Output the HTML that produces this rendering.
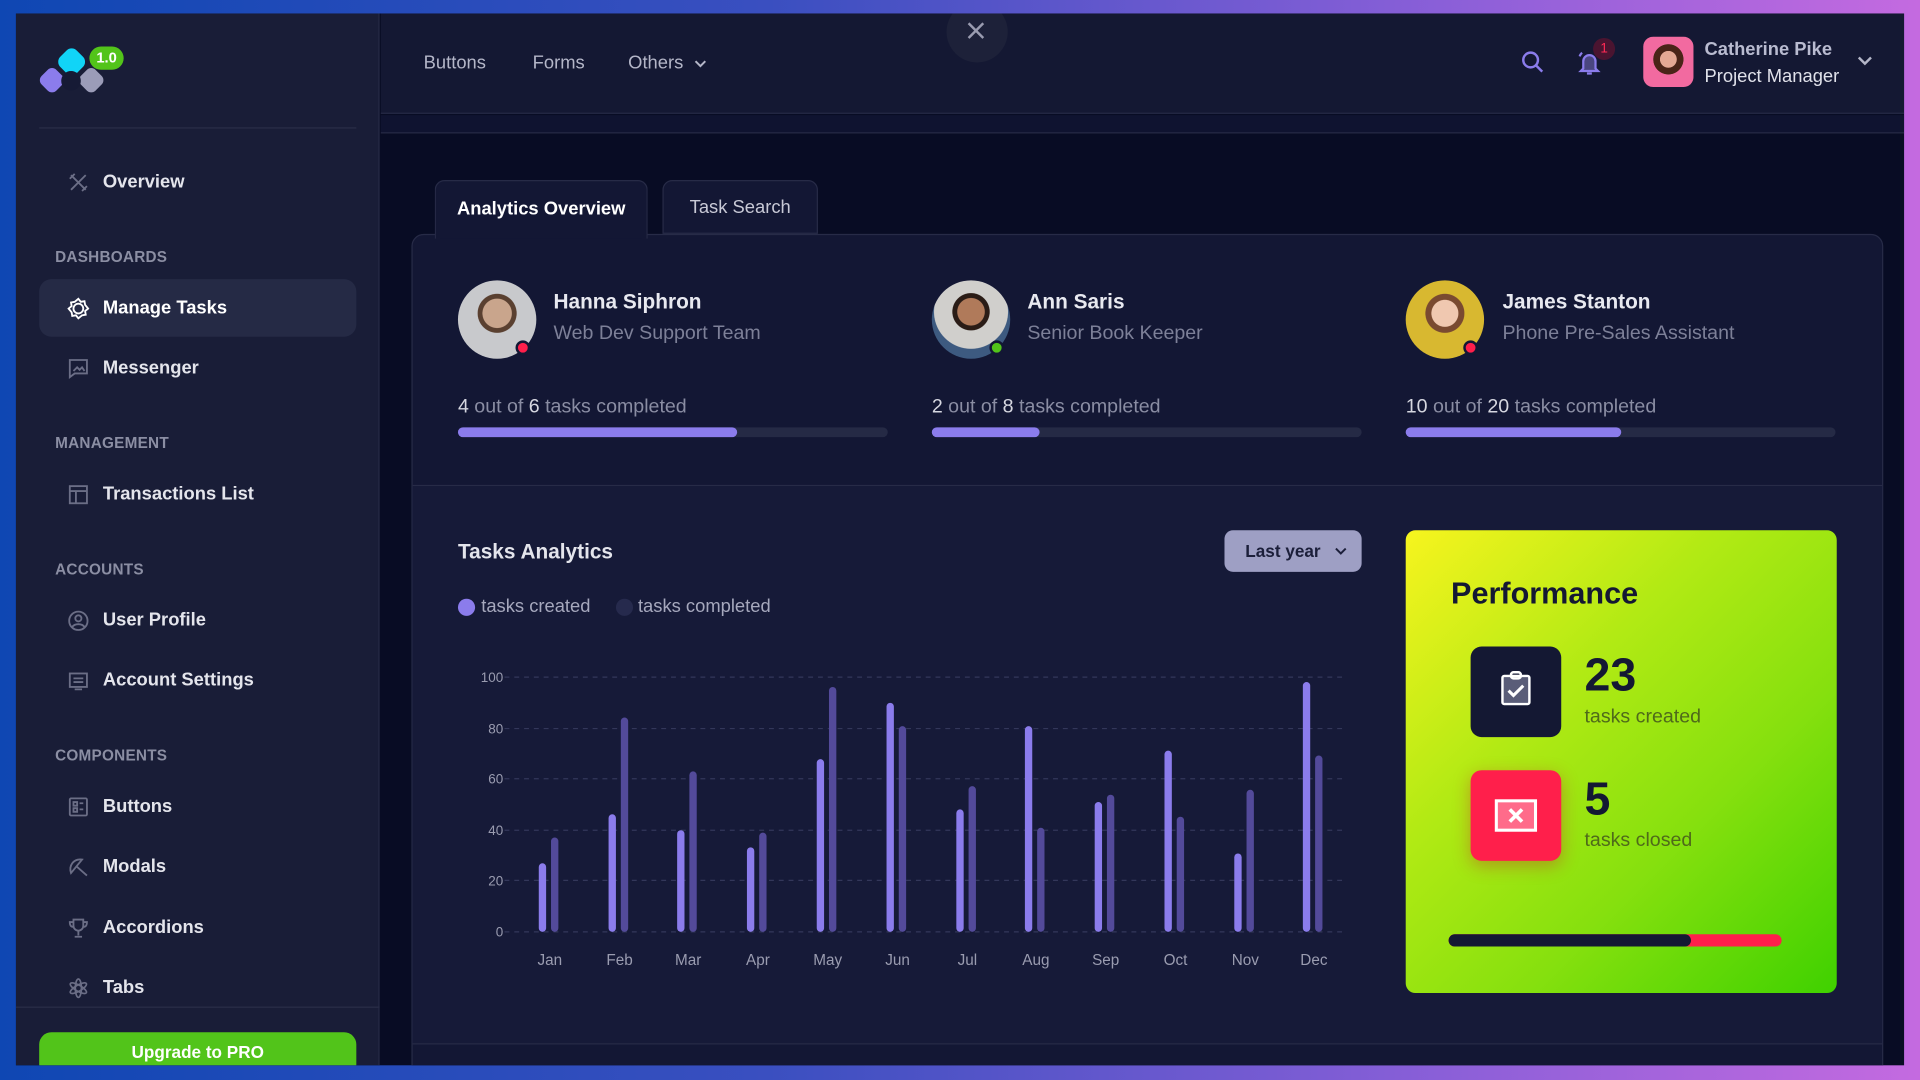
<!DOCTYPE html>
<html><head><meta charset="utf-8"><style>
*{margin:0;padding:0;box-sizing:border-box}
html,body{width:1920px;height:1080px;overflow:hidden;background:#1a4bb0}
body{font-family:"Liberation Sans",sans-serif}
#w{position:absolute;left:0;top:0;width:1568px;height:882px;transform:scale(1.22449);transform-origin:0 0;background:linear-gradient(90deg,#0f47b3 0%,#3a4fc0 40%,#8a5fd8 75%,#c46ae0 100%);overflow:hidden}
.a{position:absolute}
#in{left:13px;top:11px;width:1542px;height:859px;background:#080c24;overflow:hidden}
#side{left:0;top:0;width:297px;height:859px;background:#191d37;border-right:1px solid #262a45}
.sec{position:absolute;left:32px;font-size:12.5px;font-weight:bold;color:#8b8ea3;letter-spacing:0.2px}
.it{position:absolute;left:71px;font-size:15px;font-weight:bold;color:#e4e5ec}
.ic{position:absolute;left:42px;width:18px;height:18px}
#hdr{left:298px;top:0;width:1244px;height:82px;background:#141833;border-bottom:1px solid #262a45}
.nav{position:absolute;top:32px;font-size:15px;color:#b4b6c8}
.card{background:#131734;border:1px solid #272b47;border-radius:10px}
.nm{font-size:17px;font-weight:bold;color:#e8e9f0}
.rl{font-size:16px;color:#7d8098}
.pt{font-size:16px;color:#8a8da3}
.pt b{color:#d6d7e0;font-weight:normal}
.bar{height:8px;border-radius:4px;background:#252a45}
.bar i{display:block;height:8px;border-radius:4px;background:#8b7cec}
.av{width:64px;height:64px;border-radius:50%}
.dot{width:12px;height:12px;border-radius:50%;border:2px solid #131734}
</style></head><body><div id="w">
<div id="in" class="a">
 <div id="side" class="a">
  <div class="a" style="left:35.5px;top:29.5px;width:19px;height:19px;background:#11d4f7;border-radius:6px;transform:rotate(45deg)"></div>
  <div class="a" style="left:20.5px;top:45.5px;width:17px;height:17px;background:#8b7cec;border-radius:5px;transform:rotate(45deg)"></div>
  <div class="a" style="left:52.5px;top:45.5px;width:17px;height:17px;background:#9b9cb8;border-radius:5px;transform:rotate(45deg)"></div>
  <div class="a" style="left:37px;top:47px;width:16px;height:16px;background:#161a35;border-radius:50%"></div>
  <div class="a" style="left:60px;top:27px;width:28px;height:19px;background:#52c41a;border-radius:10px;color:#fff;font-size:12px;font-weight:bold;text-align:center;line-height:19px">1.0</div>
  <div class="a" style="left:19px;top:93px;width:259px;height:1px;background:#2a2e48"></div>

  <svg class="ic" style="top:129px" viewBox="0 0 18 18" fill="none" stroke="#6b6e86" stroke-width="1.5"><path d="M3 3l12 12M15 3L3 15M2 6l4-4M12 16l4-4"/></svg>
  <div class="it" style="top:129px">Overview</div>
  <div class="sec" style="top:192px">DASHBOARDS</div>
  <div class="a" style="left:19px;top:217px;width:259px;height:47px;background:#252a45;border-radius:10px"></div>
  <svg class="ic" style="top:232px" viewBox="0 0 18 18" fill="none" stroke="#fff" stroke-width="1.5"><path d="M9 1l2 2.5 3-.5.5 3L17 9l-2.5 2 .5 3-3 .5L9 17l-2-2.5-3 .5-.5-3L1 9l2.5-2-.5-3 3-.5z"/><circle cx="9" cy="9" r="4"/></svg>
  <div class="it" style="top:232px;color:#fff">Manage Tasks</div>
  <svg class="ic" style="top:281px" viewBox="0 0 18 18" fill="none" stroke="#6b6e86" stroke-width="1.5"><path d="M2 2h14v11H6l-4 3z"/><path d="M5 11l3-3 2 2 2-2 2 3" /></svg>
  <div class="it" style="top:281px">Messenger</div>
  <div class="sec" style="top:344px">MANAGEMENT</div>
  <svg class="ic" style="top:384px" viewBox="0 0 18 18" fill="none" stroke="#6b6e86" stroke-width="1.5"><rect x="2" y="2" width="14" height="14"/><path d="M2 6h14M7 6v10"/></svg>
  <div class="it" style="top:384px">Transactions List</div>
  <div class="sec" style="top:447px">ACCOUNTS</div>
  <svg class="ic" style="top:487px" viewBox="0 0 18 18" fill="none" stroke="#6b6e86" stroke-width="1.5"><circle cx="9" cy="9" r="7.5"/><circle cx="9" cy="7" r="2.5"/><path d="M4 14c2-3 8-3 10 0"/></svg>
  <div class="it" style="top:487px">User Profile</div>
  <svg class="ic" style="top:536px" viewBox="0 0 18 18" fill="none" stroke="#6b6e86" stroke-width="1.5"><rect x="2" y="3" width="14" height="11"/><path d="M5 7h8M5 10h8M6 16h6"/></svg>
  <div class="it" style="top:536px">Account Settings</div>
  <div class="sec" style="top:599px">COMPONENTS</div>
  <svg class="ic" style="top:639px" viewBox="0 0 18 18" fill="none" stroke="#6b6e86" stroke-width="1.5"><rect x="2" y="2" width="14" height="14" rx="1"/><path d="M5 5h3v3H5zM5 10h3v3H5zM10 6h3M10 11h3"/></svg>
  <div class="it" style="top:639px">Buttons</div>
  <svg class="ic" style="top:688px" viewBox="0 0 18 18" fill="none" stroke="#6b6e86" stroke-width="1.5"><path d="M3 14C1 8 5 2 12 3L3 14zM8 9l8 7"/></svg>
  <div class="it" style="top:688px">Modals</div>
  <svg class="ic" style="top:738px" viewBox="0 0 18 18" fill="none" stroke="#6b6e86" stroke-width="1.5"><path d="M5 2h8v5a4 4 0 01-8 0zM5 4H2c0 3 1 4 3 4M13 4h3c0 3-1 4-3 4M9 11v4M6 16h6"/></svg>
  <div class="it" style="top:738px">Accordions</div>
  <svg class="ic" style="top:787px" viewBox="0 0 18 18" fill="none" stroke="#6b6e86" stroke-width="1.4"><ellipse cx="9" cy="9" rx="2.5" ry="7.5"/><ellipse cx="9" cy="9" rx="2.5" ry="7.5" transform="rotate(60 9 9)"/><ellipse cx="9" cy="9" rx="2.5" ry="7.5" transform="rotate(-60 9 9)"/></svg>
  <div class="it" style="top:787px">Tabs</div>
  <div class="a" style="left:0;top:811px;width:297px;height:1px;background:#2a2e48"></div>
  <div class="a" style="left:19px;top:832px;width:259px;height:36px;background:#52c41a;border-radius:10px;color:#fff;font-weight:bold;font-size:14px;text-align:center;line-height:32px">Upgrade to PRO</div>
 </div>

 <div id="hdr" class="a">
  <div class="nav" style="left:35px">Buttons</div>
  <div class="nav" style="left:124px">Forms</div>
  <div class="nav" style="left:202px">Others</div>
  <svg class="a" style="left:256px;top:38px" width="10" height="7" viewBox="0 0 10 7" fill="none" stroke="#b4b6c8" stroke-width="1.6"><path d="M1 1l4 4 4-4"/></svg>
  <div class="a" style="left:462px;top:-10px;width:50px;height:50px;border-radius:50%;background:#1d2139"></div>
  <svg class="a" style="left:478px;top:6px" width="16" height="16" viewBox="0 0 16 16" stroke="#9a9cb0" stroke-width="2"><path d="M2 2l12 12M14 2L2 14"/></svg>
  <svg class="a" style="left:931px;top:30px" width="20" height="20" viewBox="0 0 20 20" fill="none" stroke="#8b7cec" stroke-width="2"><circle cx="8" cy="8" r="6"/><path d="M12.5 12.5l5 5"/></svg>
  <svg class="a" style="left:975px;top:28px" width="24" height="24" viewBox="0 0 24 24" fill="#4a4680" stroke="#8b7cec" stroke-width="1.8"><path d="M7 17V11a5 5 0 0110 0v6l2 2H5z"/><path d="M10 21h4" fill="none"/><path d="M4 7a8 8 0 012-3M20 7a8 8 0 00-2-3" fill="none"/></svg>
  <div class="a" style="left:990px;top:20px;width:18px;height:18px;border-radius:50%;background:#4a1430;color:#ff2a55;font-size:11px;text-align:center;line-height:18px">1</div>
  <div class="a" style="left:1031px;top:19px;width:41px;height:41px;border-radius:8px;background:radial-gradient(circle at 50% 45%,#e4a894 0 22%,#4a2418 23% 40%,#f26aa0 41%)"></div>
  <div class="a" style="left:1081px;top:21px;font-size:15px;font-weight:bold;color:#b9bbd0">Catherine Pike</div>
  <div class="a" style="left:1081px;top:43px;font-size:15px;color:#e0e1ea">Project Manager</div>
  <svg class="a" style="left:1205px;top:34px" width="14" height="10" viewBox="0 0 14 10" fill="none" stroke="#b4b6c8" stroke-width="2"><path d="M2 2l5 5 5-5"/></svg>
 </div>
 <div class="a" style="left:298px;top:83px;width:1244px;height:15px;background:#0f1330;border-bottom:1px solid #262a45"></div>

 <div class="a" style="left:342px;top:136px;width:174px;height:48px;background:#131734;border:1px solid #272b47;border-bottom:none;border-radius:8px 8px 0 0;z-index:2;color:#fff;font-size:15px;font-weight:bold;text-align:center;line-height:46px">Analytics Overview</div>
 <div class="a" style="left:528px;top:136px;width:127px;height:44px;background:#131734;border:1px solid #272b47;border-radius:8px 8px 0 0;color:#c8c9d6;font-size:15px;text-align:center;line-height:44px">Task Search</div>

 <div class="a card" style="left:323px;top:180px;width:1202px;height:700px;background:#131734"></div>
 <div class="a" style="left:324px;top:385px;width:1200px;height:1px;background:#272b47"></div>
 <div class="a" style="left:324px;top:386px;width:1200px;height:455px;background:#161a38"></div>
 <div class="a" style="left:324px;top:841px;width:1200px;height:1px;background:#272b47"></div>

 <div class="a av" style="left:361px;top:218px;background:radial-gradient(circle at 50% 42%,#c9a58c 0 24%,#5a4030 25% 32%,#c8c9cc 33%)"></div>
 <div class="a dot" style="left:408px;top:267px;background:#ff1f4b"></div>
 <div class="a nm" style="left:439px;top:226px">Hanna Siphron</div>
 <div class="a rl" style="left:439px;top:253px">Web Dev Support Team</div>
 <div class="a pt" style="left:361px;top:313px"><b>4</b> out of <b>6</b> tasks completed</div>
 <div class="a bar" style="left:361px;top:338px;width:351px"><i style="width:228px"></i></div>

 <div class="a av" style="left:748px;top:218px;background:radial-gradient(circle at 50% 40%,#b07a5a 0 22%,#2a1c16 23% 30%,#d0cfcc 31% 60%,#3d5a80 61%)"></div>
 <div class="a dot" style="left:795px;top:267px;background:#52c41a"></div>
 <div class="a nm" style="left:826px;top:226px">Ann Saris</div>
 <div class="a rl" style="left:826px;top:253px">Senior Book Keeper</div>
 <div class="a pt" style="left:748px;top:313px"><b>2</b> out of <b>8</b> tasks completed</div>
 <div class="a bar" style="left:748px;top:338px;width:351px"><i style="width:88px"></i></div>

 <div class="a av" style="left:1135px;top:218px;background:radial-gradient(circle at 50% 42%,#f0c8b0 0 22%,#7a4a30 23% 32%,#d8b830 33%)"></div>
 <div class="a dot" style="left:1182px;top:267px;background:#ff1f4b"></div>
 <div class="a nm" style="left:1214px;top:226px">James Stanton</div>
 <div class="a rl" style="left:1214px;top:253px">Phone Pre-Sales Assistant</div>
 <div class="a pt" style="left:1135px;top:313px"><b>10</b> out of <b>20</b> tasks completed</div>
 <div class="a bar" style="left:1135px;top:338px;width:351px"><i style="width:176px"></i></div>

 <div class="a" style="left:361px;top:430px;font-size:17px;font-weight:bold;color:#e4e5ec">Tasks Analytics</div>
 <div class="a" style="left:987px;top:422px;width:112px;height:34px;border-radius:7px;background:#9e9fc4;color:#1c1f3a;font-size:14px;font-weight:bold;line-height:34px;padding-left:17px">Last year</div>
 <svg class="a" style="left:1077px;top:436px" width="10" height="7" viewBox="0 0 10 7" fill="none" stroke="#1c1f3a" stroke-width="1.6"><path d="M1 1l4 4 4-4"/></svg>
 <div class="a" style="left:361px;top:478px;width:14px;height:14px;border-radius:50%;background:#8b7cec"></div>
 <div class="a" style="left:380px;top:476px;font-size:15px;color:#a6a8bd">tasks created</div>
 <div class="a" style="left:490px;top:478px;width:14px;height:14px;border-radius:50%;background:#262a4d"></div>
 <div class="a" style="left:508px;top:476px;font-size:15px;color:#a6a8bd">tasks completed</div>

 <svg class="a" style="left:-13px;top:-11px" width="1568" height="882" font-family="Liberation Sans, sans-serif" font-size="11" fill="#9a9cb0">
  <g stroke="#33375a" stroke-dasharray="4 4" stroke-width="1">
   <line x1="412" y1="553" x2="1100" y2="553"/><line x1="412" y1="595" x2="1100" y2="595"/><line x1="412" y1="636" x2="1100" y2="636"/><line x1="412" y1="678" x2="1100" y2="678"/><line x1="412" y1="719" x2="1100" y2="719"/><line x1="412" y1="761" x2="1100" y2="761"/>
  </g>
  <g text-anchor="end"><text x="411" y="557">100</text><text x="411" y="599">80</text><text x="411" y="640">60</text><text x="411" y="682">40</text><text x="411" y="723">20</text><text x="411" y="765">0</text></g>
  <g text-anchor="middle" font-size="12.5"><text x="449" y="788">Jan</text><text x="506" y="788">Feb</text><text x="562" y="788">Mar</text><text x="619" y="788">Apr</text><text x="676" y="788">May</text><text x="733" y="788">Jun</text><text x="790" y="788">Jul</text><text x="846" y="788">Aug</text><text x="903" y="788">Sep</text><text x="960" y="788">Oct</text><text x="1017" y="788">Nov</text><text x="1073" y="788">Dec</text></g>
  <g fill="#8b7cec">
   <rect x="440" y="705" width="6" height="56" rx="3"/><rect x="497" y="665" width="6" height="96" rx="3"/><rect x="553" y="678" width="6" height="83" rx="3"/><rect x="610" y="692" width="6" height="69" rx="3"/><rect x="667" y="620" width="6" height="141" rx="3"/><rect x="724" y="574" width="6" height="187" rx="3"/><rect x="781" y="661" width="6" height="100" rx="3"/><rect x="837" y="593" width="6" height="168" rx="3"/><rect x="894" y="655" width="6" height="106" rx="3"/><rect x="951" y="613" width="6" height="148" rx="3"/><rect x="1008" y="697" width="6" height="64" rx="3"/><rect x="1064" y="557" width="6" height="204" rx="3"/>
  </g>
  <g fill="#534a9a">
   <rect x="450" y="684" width="6" height="77" rx="3"/><rect x="507" y="586" width="6" height="175" rx="3"/><rect x="563" y="630" width="6" height="131" rx="3"/><rect x="620" y="680" width="6" height="81" rx="3"/><rect x="677" y="561" width="6" height="200" rx="3"/><rect x="734" y="593" width="6" height="168" rx="3"/><rect x="791" y="642" width="6" height="119" rx="3"/><rect x="847" y="676" width="6" height="85" rx="3"/><rect x="904" y="649" width="6" height="112" rx="3"/><rect x="961" y="667" width="6" height="94" rx="3"/><rect x="1018" y="645" width="6" height="116" rx="3"/><rect x="1074" y="617" width="6" height="144" rx="3"/>
  </g>
 </svg>

 <div class="a" style="left:1135px;top:422px;width:352px;height:378px;border-radius:8px;background:linear-gradient(135deg,#f7f41e 0%,#b2ea14 35%,#86e00e 65%,#3fd100 100%)">
  <div class="a" style="left:37px;top:38px;font-size:25px;font-weight:bold;color:#141833">Performance</div>
  <div class="a" style="left:53px;top:95px;width:74px;height:74px;border-radius:9px;background:#141833"></div>
  <svg class="a" style="left:77px;top:114px" width="26" height="30" viewBox="0 0 26 30" fill="none"><rect x="2" y="5" width="22" height="23" rx="1.5" fill="#5a5d78" stroke="#fff" stroke-width="2"/><rect x="9" y="2" width="8" height="5" rx="2" stroke="#fff" stroke-width="2"/><path d="M7 17l4 4 8-8" stroke="#fff" stroke-width="2.5"/></svg>
  <div class="a" style="left:146px;top:98px;font-size:38px;font-weight:bold;color:#141833">23</div>
  <div class="a" style="left:146px;top:144px;font-size:16px;color:#4f6a1a">tasks created</div>
  <div class="a" style="left:53px;top:196px;width:74px;height:74px;border-radius:9px;background:#ff1f4b;box-shadow:0 4px 14px rgba(200,40,40,.4)"></div>
  <svg class="a" style="left:72px;top:219px" width="36" height="28" viewBox="0 0 36 28" fill="none"><rect x="2" y="2" width="32" height="24" fill="#ff6b8a" stroke="#fff" stroke-width="2.5"/><path d="M13 9l10 10M23 9L13 19" stroke="#fff" stroke-width="3"/></svg>
  <div class="a" style="left:146px;top:199px;font-size:38px;font-weight:bold;color:#141833">5</div>
  <div class="a" style="left:146px;top:245px;font-size:16px;color:#4f6a1a">tasks closed</div>
  <div class="a" style="left:35px;top:330px;width:272px;height:10px;border-radius:5px;background:#ff1f4b"><div style="width:198px;height:10px;border-radius:5px;background:#141833"></div></div>
 </div>
</div>
</div></body></html>
